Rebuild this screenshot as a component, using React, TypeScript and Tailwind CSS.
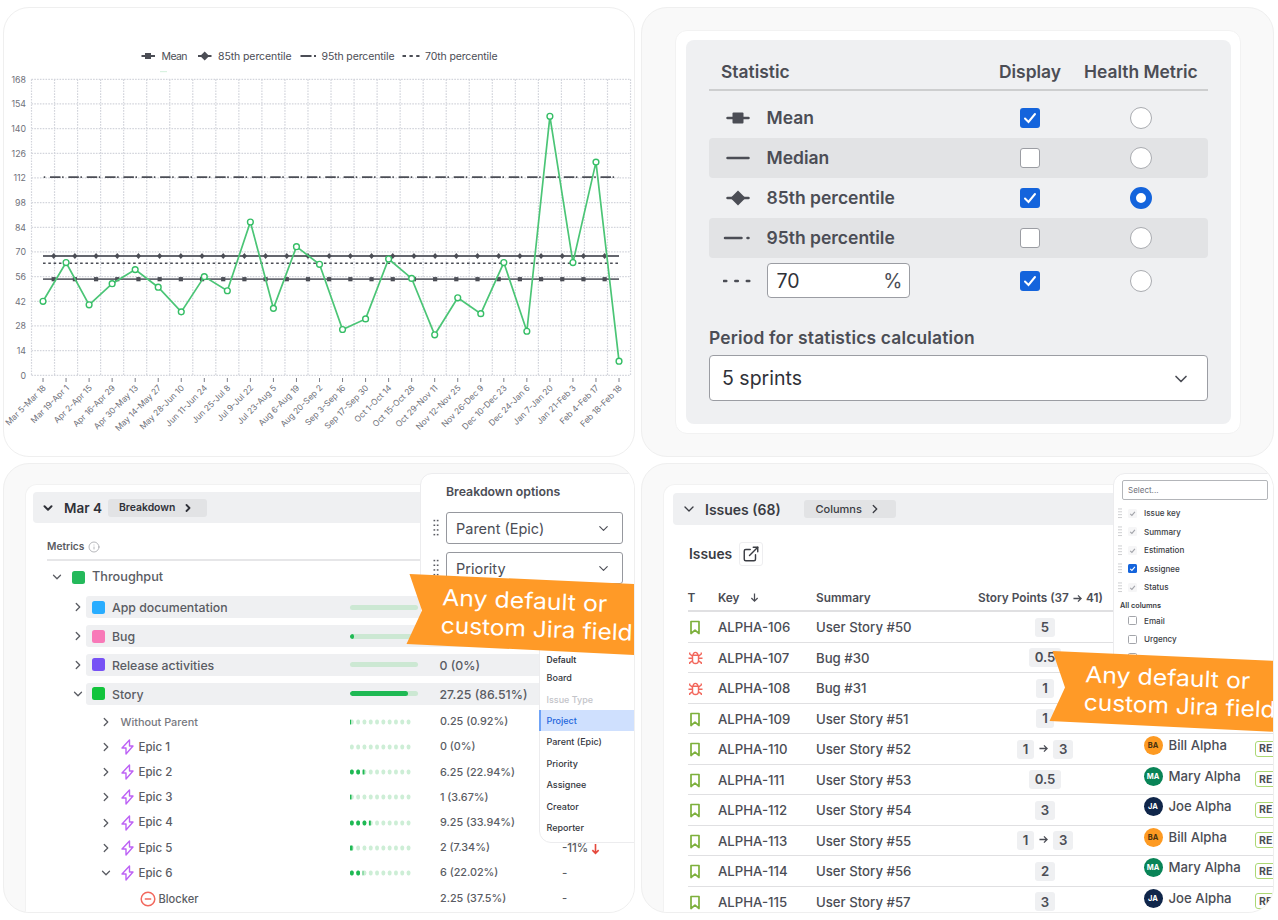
import type { ReactNode } from "react";
import { ChevronDown, ChevronRight, ExternalLink, Info } from "lucide-react";
import clsx from "clsx";

/* ---------- Control chart ---------- */

const POINTS: [string, number][] = [
  ["Mar 5-Mar 18", 42],
  ["Mar 19-Apr 1", 64],
  ["Apr 2-Apr 15", 40],
  ["Apr 16-Apr 29", 52],
  ["Apr 30-May 13", 60],
  ["May 14-May 27", 50],
  ["May 28-Jun 10", 36],
  ["Jun 11-Jun 24", 56],
  ["Jun 25-Jul 8", 48],
  ["Jul 9-Jul 22", 87],
  ["Jul 23-Aug 5", 38],
  ["Aug 6-Aug 19", 73],
  ["Aug 20-Sep 2", 63],
  ["Sep 3-Sep 16", 26],
  ["Sep 17-Sep 30", 32],
  ["Oct 1-Oct 14", 66],
  ["Oct 15-Oct 28", 55],
  ["Oct 29-Nov 11", 23],
  ["Nov 12-Nov 25", 44],
  ["Nov 26-Dec 9", 35],
  ["Dec 10-Dec 23", 64],
  ["Dec 24-Jan 6", 25],
  ["Jan 7-Jan 20", 147],
  ["Jan 21-Feb 3", 64],
  ["Feb 4-Feb 17", 121],
  ["Feb 18-Feb 18", 8],
];

const STEP = 23.04;
const LEFT = 31.5;
const RIGHT = LEFT + STEP * 26;
const TOP = 79.3;
const BOTTOM = 375.3;
const px = (i: number) => LEFT + STEP * (i + 0.5);
const py = (v: number) => BOTTOM - (v * (BOTTOM - TOP)) / 168;

const INK = "#4b4d55";

function Chart() {
  const markers = Array.from({ length: 27 }, (_, i) => 53.7 + i * 21.19);
  return (
    <svg viewBox="4 8 630 448" className="block h-[448px] w-[630px]" fontFamily="Inter, sans-serif">
      <rect x="160" y="71" width="7" height="1.2" fill="#d9f2e1" />

      <g stroke={INK} strokeWidth="1.8" fill={INK}>
        <path d="M141.500 56H155" />
        <rect x="145" y="53" width="6" height="6" stroke="none" />
        <path d="M198 56H211.500" />
        <path d="M204.700 51.500L209.200 56L204.700 60.500L200.200 56Z" stroke="none" />
        <path d="M300.500 56H311.500M314 56H316" />
        <path d="M402.500 56H406M409.500 56H412.800M416.200 56H419.500" />
      </g>
      <g fontSize="10.500" fill="#4b4d55">
        <text x="161.500" y="60" textLength="26">Mean</text>
        <text x="218" y="60" textLength="73.500">85th percentile</text>
        <text x="321.500" y="60" textLength="73">95th percentile</text>
        <text x="425" y="60" textLength="72.500">70th percentile</text>
      </g>

      <g stroke="#d3d5dc" strokeWidth="1.200" strokeDasharray="1.6 1.2">
        {Array.from({ length: 13 }, (_, i) => (
          <path key={i} d={`M${LEFT} ${py(i * 14)}H${RIGHT}`} />
        ))}
        {Array.from({ length: 27 }, (_, i) => (
          <path key={i} d={`M${LEFT + i * STEP} ${TOP}V${BOTTOM}`} />
        ))}
      </g>
      <g fontSize="8.800" fill="#6f717a" textAnchor="end">
        {Array.from({ length: 13 }, (_, i) => (
          <text key={i} x="26" y={py(i * 14) + 3.2}>
            {i * 14}
          </text>
        ))}
      </g>

      <g stroke={INK} strokeWidth="1.8" fill="none">
        <path d="M43 177.200H619" strokeDasharray="10.5 1.6 1.5 4.75" strokeDashoffset="11.35" />
        <path d="M43 256H619" stroke="#64666e" />
        <path d="M43 263.300H619" strokeWidth="1.500" strokeDasharray="2.600 2.700" />
        <path d="M43 279.200H619" stroke="#64666e" />
      </g>
      <g fill={INK}>
        {markers.map((x) => (
          <path key={x} d={`M${x} 253L${x + 2.6} 256L${x} 259L${x - 2.6} 256Z`} />
        ))}
        {markers.map((x) => (
          <rect key={x} x={x - 2.1} y="277.100" width="4.200" height="4.200" />
        ))}
      </g>

      <polyline
        points={POINTS.map(([, v], i) => `${px(i)},${py(v)}`).join(" ")}
        fill="none"
        stroke="#4bc576"
        strokeWidth="1.700"
      />
      {POINTS.map(([label, v], i) => (
        <g key={label}>
          <circle cx={px(i)} cy={py(v)} r="2.900" fill="#fff" stroke="#36be66" strokeWidth="1.400" />
          <path d={`M${px(i)} 378V382`} stroke="#7d7f87" strokeWidth="1" />
          <text
            transform={`translate(${px(i) + 3.5} 388.500) rotate(-45)`}
            textAnchor="end"
            fontSize="8.400"
            fill="#6f717a"
          >
            {label}
          </text>
        </g>
      ))}
    </svg>
  );
}

/* ---------- Statistics settings ---------- */

type Glyph = "square" | "line" | "diamond" | "dashdot" | "dots";

function LineGlyph({ kind }: { kind: Glyph }) {
  return (
    <svg viewBox="0 0 30 20" className="h-5 w-[30px] shrink-0" stroke="#4b4d55" strokeWidth="2.500" fill="#4b4d55">
      {kind === "square" && (
        <>
          <path d="M4.500 10H25.500" strokeLinecap="round" />
          <rect x="9.500" y="4.500" width="11" height="11" rx="1" stroke="none" />
        </>
      )}
      {kind === "line" && <path d="M4.500 10H25.500" strokeLinecap="round" />}
      {kind === "diamond" && (
        <>
          <path d="M4.500 10H25.500" strokeLinecap="round" />
          <path d="M15 2.500L22.500 10L15 17.500L7.500 10Z" stroke="none" />
        </>
      )}
      {kind === "dashdot" && <path d="M2 10H18.500M24.500 10H25.500" strokeLinecap="round" />}
      {kind === "dots" && <path d="M0.800 10H3.300M12.300 10H14.800M23.800 10H26.300" strokeLinecap="round" />}
    </svg>
  );
}

function Checkbox({ checked }: { checked: boolean }) {
  return (
    <span
      className={clsx(
        "grid h-5 w-5 place-items-center rounded-[3px]",
        checked ? "bg-[#1464dc]" : "border-[1.500px] border-[#9b9da3] bg-white"
      )}
    >
      {checked && (
        <svg viewBox="0 0 20 20" className="h-5 w-5" fill="none" stroke="#fff" strokeWidth="2">
          <path d="M5 10.500L8.500 14L15 6" strokeLinecap="round" />
        </svg>
      )}
    </span>
  );
}

function Radio({ checked }: { checked: boolean }) {
  return (
    <span
      className={clsx(
        "ml-[60px] h-[22px] w-[22px] shrink-0 rounded-full bg-white",
        checked ? "border-[6.500px] border-[#1464dc]" : "border border-[#a9abb0]"
      )}
    />
  );
}

function StatRow({
  glyph,
  label,
  display,
  health,
  shaded,
}: {
  glyph: Glyph;
  label: ReactNode;
  display: boolean;
  health: boolean;
  shaded?: boolean;
}) {
  return (
    <div className={clsx("flex h-10 items-center rounded pl-[13.500px]", shaded && "bg-[#e2e3e5]")}>
      <LineGlyph kind={glyph} />
      <div className="ml-[14px] flex w-[223px] shrink-0 text-[17.500px] font-semibold">
        {typeof label === "string" ? <span className="pt-px">{label}</span> : label}
      </div>
      <div className="flex w-20 shrink-0 justify-center">
        <Checkbox checked={display} />
      </div>
      <Radio checked={health} />
    </div>
  );
}

function Statistics() {
  return (
    <div className="ml-[33px] mt-[22px] h-[404px] w-[566px] rounded-xl border border-[#f2f2f2] bg-white p-[9px] pl-[10px]">
      <div className="h-[384px] rounded-lg bg-[#eff0f2] px-[23px] text-[#4b4d55]">
        <div className="flex h-[51px] items-center border-b-2 border-[#cdcecf] pl-3 pt-[15px] text-[17.400px] font-semibold">
          <span className="w-[278px]">Statistic</span>
          <span className="w-[85px]">Display</span>
          <span className="whitespace-nowrap">Health Metric</span>
        </div>
        <div className="mt-[6.500px]">
          <StatRow glyph="square" label="Mean" display health={false} />
          <StatRow glyph="line" label="Median" display={false} health={false} shaded />
          <StatRow glyph="diamond" label="85th percentile" display health />
          <StatRow glyph="dashdot" label="95th percentile" display={false} health={false} shaded />
        </div>
        <div className="mt-[3px]">
          <StatRow
            glyph="dots"
            display
            health={false}
            label={
              <div className="flex h-[35px] w-[143px] items-center justify-between rounded border-[1.500px] border-[#9b9da3] bg-white pl-[9px] pr-[6px] pt-[2px] text-[19.500px] font-normal text-[#2f3138]">
                <span>70</span>
                <span className="text-[#4b4d55]">%</span>
              </div>
            }
          />
        </div>
        <div className="mt-[24.500px] text-[17.400px] font-semibold leading-[26px] tracking-[0.180px]">
          Period for statistics calculation
        </div>
        <div className="mt-1 flex h-[46px] items-center justify-between rounded border-[1.500px] border-[#9b9da3] bg-white pl-3 pr-[16px] pt-[2px] text-[19.500px] text-[#2f3138]">
          <span>5 sprints</span>
          <ChevronDown className="h-5 w-5 text-[#4b4d55]" />
        </div>
      </div>
    </div>
  );
}

/* ---------- Shared bits ---------- */

function Ribbon({ className }: { className: string }) {
  return (
    <div className={clsx("absolute", className)}>
      <svg viewBox="0 0 240 90" className="h-[90px] w-[240px]">
        <path d="M3.500 2L240 12.500V83.500L0.500 72L16 38.500Z" fill="#ff9a27" />
        <g fill="#fff" fontFamily="Inter, sans-serif" fontSize="22.500">
          <text transform="translate(36 33.200) rotate(2.300)" textLength="165" lengthAdjust="spacingAndGlyphs">
            Any default or
          </text>
          <text transform="translate(34.500 61) rotate(2.300)" textLength="192" lengthAdjust="spacingAndGlyphs">
            custom Jira field
          </text>
        </g>
      </svg>
    </div>
  );
}

function Grip({ className }: { className?: string }) {
  return (
    <svg viewBox="0 0 6 18" className={className} fill="#5a5c63">
      {[1.5, 6.2, 10.9, 15.6].map((y) => (
        <g key={y}>
          <rect x="0.500" y={y - 0.7} width="1.700" height="1.500" />
          <rect x="3.800" y={y - 0.7} width="1.700" height="1.500" />
        </g>
      ))}
    </svg>
  );
}

/* ---------- Breakdown ---------- */

const TYPES = [
  { name: "App documentation", color: "#29adff", pct: 0, value: "" },
  { name: "Bug", color: "#f879b8", pct: 6, value: "" },
  { name: "Release activities", color: "#7751f5", pct: 0, value: "0 (0%)" },
  { name: "Story", color: "#12c43c", pct: 86.51, value: "27.25 (86.51%)", open: true },
];

const EPICS = [
  { name: "Without Parent", fill: 0.3, value: "0.25 (0.92%)", delta: "" },
  { name: "Epic 1", fill: 0, value: "0 (0%)", delta: "" },
  { name: "Epic 2", fill: 2.5, value: "6.25 (22.94%)", delta: "" },
  { name: "Epic 3", fill: 0.4, value: "1 (3.67%)", delta: "" },
  { name: "Epic 4", fill: 3.5, value: "9.25 (33.94%)", delta: "" },
  { name: "Epic 5", fill: 0.7, value: "2 (7.34%)", delta: "-11%" },
  { name: "Epic 6", fill: 2.2, value: "6 (22.02%)", delta: "-", open: true },
];

const FIELDS = ["Parent (Epic)", "Priority", "Assignee", "Creator", "Reporter"];

function DotMeter({ fill }: { fill: number }) {
  return (
    <svg viewBox="0 0 62 6" className="h-[6px] w-[62px]">
      {Array.from({ length: 10 }, (_, i) => {
        const part = Math.max(0, Math.min(1, fill - i));
        return (
          <g key={i}>
            <rect x={i * 6.3} y="0.500" width="3.700" height="5" rx="1.700" fill="#cdeed6" />
            {part > 0 && (
              <rect x={i * 6.3} y="0.500" width={3.7 * part} height="5" rx={part === 1 ? 1.7 : 0.6} fill="#1fb954" />
            )}
          </g>
        );
      })}
    </svg>
  );
}

function Toggle({ open }: { open?: boolean }) {
  return open ? (
    <ChevronDown className="h-3.5 w-3.5 shrink-0" strokeWidth={2.2} />
  ) : (
    <ChevronRight className="h-3.5 w-3.5 shrink-0" strokeWidth={2.2} />
  );
}

function EpicIcon() {
  return (
    <svg
      viewBox="0 0 13 16"
      className="mr-[5px] h-[16px] w-[13px]"
      fill="none"
      stroke="#bd62f5"
      strokeWidth="1.400"
      strokeLinejoin="round"
    >
      <path d="M8.500 1L1 9H5V15L12 7H8.500Z" />
    </svg>
  );
}

function Breakdown() {
  return (
    <>
      <div className="ml-[21px] mt-5 h-[440px] rounded-tl-xl border-l border-t border-[#f2f2f2] bg-white text-[#5a5c63]">
        <div className="ml-[7px] mt-[7px] flex h-[31px] items-center rounded bg-[#eff0f2] pl-2 text-[#2f3138]">
          <ChevronDown className="h-[14px] w-[14px]" strokeWidth={3.4} />
          <span className="ml-[9px] w-11 pt-[2px] text-[13.500px] font-semibold">Mar 4</span>
          <span className="flex h-[18px] w-[99px] items-center rounded-[3px] bg-[#e2e3e5] pl-[11px] text-[10.400px] font-semibold">
            Breakdown
            <ChevronRight className="ml-[7px] h-3 w-3" strokeWidth={3.6} />
          </span>
        </div>
        <div className="ml-[21px] flex h-[38px] items-center border-b-2 border-[#e6e6e8] pt-[11px] text-[10.200px] font-semibold">
          Metrics
          <Info className="ml-1 h-3 w-3 text-[#a3a5aa]" strokeWidth={1.6} />
        </div>
        <div className="flex h-8 items-center pl-[24px] text-[12.700px] font-medium">
          <Toggle open />
          <span className="ml-2 mr-[7px] h-[13px] w-[13px] rounded-[2.500px] bg-[#24b95b]" />
          <span>Throughput</span>
        </div>
        {TYPES.map((t) => (
          <div key={t.name} className="flex h-[28.800px] items-center pl-[44.500px]">
            <Toggle open={t.open} />
            <div className="ml-[1.500px] flex h-[22px] flex-1 items-center rounded-l-[3px] bg-[#eff0f2] pl-[6px] text-[12.300px] font-medium">
              <span className="mr-[7px] h-[13px] w-[13px] rounded-[2.500px]" style={{ background: t.color }} />
              <span className="w-[237.500px] pt-[2px]">{t.name}</span>
              <span className="h-[5px] w-[68px] overflow-hidden rounded-full bg-[#cce8d3]">
                <span className="block h-full rounded-full bg-[#1fb954]" style={{ width: `${t.pct}%` }} />
              </span>
              <span className="ml-[22px] pt-[2px]">{t.value}</span>
            </div>
          </div>
        ))}
        <div className="pt-px">
          {EPICS.map((e, i) => (
            <div key={e.name} className="flex h-[25.200px] items-center pl-[73px] text-[11.500px] font-medium">
              <Toggle open={e.open} />
              <span className="ml-[7.500px] flex w-[229px] items-center">
                {i > 0 && <EpicIcon />}
                <span className={i === 0 ? "text-[10.900px] text-[#777980]" : "pt-px"}>{e.name}</span>
              </span>
              <span className="w-[90.500px]">
                <DotMeter fill={e.fill} />
              </span>
              <span className="w-[122px] pt-px text-[10.800px]">{e.value}</span>
              <span className="flex items-center pt-px">
                {e.delta}
                {e.delta === "-11%" && (
                  <svg
                    viewBox="0 0 10 13"
                    className="ml-[3px] mt-[2px] h-[12px] w-[9px]"
                    fill="none"
                    stroke="#e5483c"
                    strokeWidth="1.800"
                  >
                    <path d="M5 1V11M1.500 7.800L5 11.300L8.500 7.800" />
                  </svg>
                )}
              </span>
            </div>
          ))}
        </div>
        <div className="flex h-[25.200px] items-center pl-[114px] pt-px text-[11.100px] font-medium">
          <svg viewBox="0 0 16 16" className="h-4 w-4" fill="none" stroke="#f2685d" strokeWidth="1.500">
            <circle cx="8" cy="8" r="6.800" />
            <path d="M4.800 8H11.200" />
          </svg>
          <span className="ml-[2.500px] w-[281.500px] pt-px">Blocker</span>
          <span className="w-[122px] pt-px text-[10.800px]">2.25 (37.5%)</span>
          <span>-</span>
        </div>
      </div>

      {/* field picker opened from the Priority select */}
      <div className="absolute left-[535px] top-[169px] h-[210px] w-[110px] rounded-bl-xl border border-[#ececee] bg-white text-[9px] font-medium text-[#35373e]">
        <div className="mt-[17px] pl-[6.500px] text-[8.500px] font-semibold leading-[18px]">Default</div>
        <div className="pl-[6.500px] leading-[18px]">Board</div>
        <div className="mt-[1.500px] pl-[6.500px] leading-[21.400px] text-[#c3c4c9]">Issue Type</div>
        <div className="-ml-px border-l-2 border-[#6fa3f7] bg-[#cfe0fe] pl-[5.500px] leading-[21.400px] text-[#1e66dc]">
          Project
        </div>
        {FIELDS.map((f) => (
          <div key={f} className="pl-[6.500px] leading-[21.400px]">
            {f}
          </div>
        ))}
      </div>

      <div className="absolute left-[416px] top-[9px] h-[150px] w-[230px] rounded-l-xl border border-[#ececee] bg-white pl-[12px] text-[#4b4d55]">
        <div className="ml-[13px] mt-[10px] text-[12.300px] font-semibold leading-4">Breakdown options</div>
        {["Parent (Epic)", "Priority"].map((f, i) => (
          <div key={f} className={clsx("flex items-center", i === 0 ? "mt-3" : "mt-2")}>
            <Grip className="h-[18px] w-[6px]" />
            <div className="ml-[7px] flex h-[32px] w-[177px] items-center justify-between rounded-[3px] border border-[#96989e] pl-[9px] pr-[11px] pt-px text-[14.500px]">
              {f}
              <ChevronDown className="h-[15px] w-[15px]" strokeWidth={1.8} />
            </div>
          </div>
        ))}
      </div>
      <Ribbon className="left-[402px] top-[108px]" />
    </>
  );
}

/* ---------- Issues ---------- */

type Person = "Bill" | "Mary" | "Joe";

const ISSUES: { key: number; summary: string; points: string[]; person?: Person }[] = [
  { key: 106, summary: "User Story #50", points: ["5"] },
  { key: 107, summary: "Bug #30", points: ["0.5"] },
  { key: 108, summary: "Bug #31", points: ["1"] },
  { key: 109, summary: "User Story #51", points: ["1"] },
  { key: 110, summary: "User Story #52", points: ["1", "3"], person: "Bill" },
  { key: 111, summary: "User Story #53", points: ["0.5"], person: "Mary" },
  { key: 112, summary: "User Story #54", points: ["3"], person: "Joe" },
  { key: 113, summary: "User Story #55", points: ["1", "3"], person: "Bill" },
  { key: 114, summary: "User Story #56", points: ["2"], person: "Mary" },
  { key: 115, summary: "User Story #57", points: ["3"], person: "Joe" },
];

const AVATAR: Record<Person, string> = {
  Bill: "bg-[#fd9a22] text-[#4a3210]",
  Mary: "bg-[#098457] text-white",
  Joe: "bg-[#10264a] text-white",
};

function StoryIcon() {
  return (
    <svg
      viewBox="0 0 12 15"
      className="ml-[1px] h-[15px] w-3"
      fill="none"
      stroke="#7db03c"
      strokeWidth="1.700"
      strokeLinejoin="round"
    >
      <path d="M2 1.500H10V13.500L6 10.200L2 13.500Z" />
    </svg>
  );
}

function BugIcon() {
  return (
    <svg
      viewBox="0 0 16 15"
      className="h-[14px] w-[15px]"
      fill="none"
      stroke="#f2685d"
      strokeWidth="1.500"
      strokeLinejoin="round"
    >
      <path d="M4.800 4.500H11.200V9.800A3.200 3.600 0 0 1 4.800 9.800Z" />
      <path d="M5.500 4.500A2.500 3 0 0 1 10.500 4.500" />
      <path d="M0.500 7.800H4.800M11.200 7.800H15.500M1.800 1.500V3.200L4.800 5.500M14.200 1.500V3.200L11.200 5.500M1.800 14V12.500L4.800 10.500M14.200 14V12.500L11.200 10.500" />
    </svg>
  );
}

function Arrow({ className }: { className?: string }) {
  return (
    <svg viewBox="0 0 10 10" className={className} fill="none" stroke="currentColor" strokeWidth="1.400">
      <path d="M0.500 5H9M5.500 1.500L9 5L5.500 8.500" />
    </svg>
  );
}

function ColumnOption({ name, state, grip }: { name: string; state: "on" | "locked" | "off"; grip?: boolean }) {
  return (
    <div className="flex h-[18.500px] items-center text-[8.100px] font-medium">
      <span className="w-[10px]">{grip && <Grip className="h-[11px] w-1 opacity-60" />}</span>
      <span
        className={clsx(
          "mr-[7px] grid h-[9px] w-[9px] place-items-center rounded-[1.500px]",
          state === "on" && "bg-[#1464dc] text-white",
          state === "locked" && "bg-[#f6f6f7] text-[#a3a5aa]",
          state === "off" && "border border-[#a3a5aa]"
        )}
      >
        {state !== "off" && (
          <svg viewBox="0 0 9 9" className="h-[9px] w-[9px]" fill="none" stroke="currentColor" strokeWidth="1.100">
            <path d="M2.200 4.800L3.900 6.400L6.900 2.800" />
          </svg>
        )}
      </span>
      {name}
    </div>
  );
}

function Issues() {
  return (
    <>
      <div className="ml-[21px] mt-5 h-[440px] rounded-tl-xl border-l border-t border-[#f2f2f2] bg-white text-[#4b4d55]">
        <div className="ml-[9px] mt-2 flex h-8 items-center rounded bg-[#eff0f2] pl-2 text-[#3a3c43]">
          <ChevronDown className="h-4 w-4" />
          <span className="ml-2 w-[98.500px] pt-px text-[14px] font-semibold">Issues (68)</span>
          <span className="flex h-[18px] w-[92px] items-center rounded-[3px] bg-[#e2e3e5] pl-3 text-[11px] font-medium">
            Columns
            <ChevronRight className="ml-[6px] h-3.5 w-3.5" strokeWidth={2.2} />
          </span>
        </div>
        <div className="ml-[25px] flex h-[57px] items-center text-[13.800px] font-semibold text-[#3a3c43]">
          <span className="w-[49.500px] pt-px">Issues</span>
          <span className="grid h-6 w-6 place-items-center rounded-[3px] border border-[#eeeef0]">
            <ExternalLink className="h-[18px] w-[18px]" strokeWidth={1.9} />
          </span>
        </div>
        <div className="ml-[23.500px] flex h-[30px] items-center border-b-2 border-[#e0e0e2] pt-[5px] text-[11.800px] font-semibold">
          <span className="w-[30.500px]">T</span>
          <span className="flex w-[98px] items-center">
            Key
            <Arrow className="mb-[2px] ml-[10px] h-[9px] w-[9px] rotate-90" />
          </span>
          <span className="w-[162px]">Summary</span>
          <span className="flex items-center whitespace-nowrap">
            Story Points (37
            <Arrow className="mx-1 mb-px h-[9px] w-[9px]" />
            41)
          </span>
        </div>
        {ISSUES.map((issue) => (
          <div
            key={issue.key}
            className="ml-[23.500px] flex h-[30.530px] items-center border-b border-[#e0e0e2] text-[13.200px] font-medium"
          >
            <span className="w-[30.500px] shrink-0 pt-[2px]">
              {issue.summary.startsWith("Bug") ? <BugIcon /> : <StoryIcon />}
            </span>
            <span className="w-[98px] shrink-0 pt-[3px]">ALPHA-{issue.key}</span>
            <span className="w-[163px] shrink-0 pt-[3px]">{issue.summary}</span>
            <span className="flex w-[132px] shrink-0 items-center justify-center pt-px">
              {issue.points.map((p, i) => (
                <span key={i} className="flex items-center">
                  {i > 0 && <Arrow className="mx-[5px] mb-[2px] h-[9px] w-[9px]" />}
                  <span className="flex h-[19px] items-center rounded-[3px] bg-[#eff0f2] px-[5.800px] pt-px font-semibold">
                    {p}
                  </span>
                </span>
              ))}
            </span>
            {issue.person && (
              <>
                <span className="mb-[6px] ml-[32.500px] flex w-[111.500px] shrink-0 items-center">
                  <span
                    className={clsx(
                      "mr-[6px] grid h-[19px] w-[19px] shrink-0 place-items-center rounded-full text-[7.500px] font-bold",
                      AVATAR[issue.person]
                    )}
                  >
                    {issue.person[0]}A
                  </span>
                  <span className="whitespace-nowrap pt-px">{issue.person} Alpha</span>
                </span>
                <span className="flex h-[16px] w-[60px] shrink-0 items-center rounded-[3px] border-[1.500px] border-[#acd873] pl-[3px] pt-px text-[10.500px] font-bold">
                  RE
                </span>
              </>
            )}
          </div>
        ))}
      </div>

      <div className="absolute left-[471px] top-[9px] h-[210px] w-[170px] rounded-tl-xl border border-[#ececee] bg-white text-[#3a3c43]">
        <div className="ml-2 mt-[6px] flex h-5 w-[146px] items-center rounded-[2px] border border-[#b3b5b9] pl-[5px] text-[8px] text-[#6f717a]">
          Select...
        </div>
        <div className="ml-1 mt-[4px]">
          <ColumnOption name="Issue key" state="locked" grip />
          <ColumnOption name="Summary" state="locked" grip />
          <ColumnOption name="Estimation" state="locked" grip />
          <ColumnOption name="Assignee" state="on" grip />
          <ColumnOption name="Status" state="locked" grip />
          <div className="ml-[2px] mt-[2px] text-[7.300px] font-semibold leading-[13px]">All columns</div>
          <ColumnOption name="Email" state="off" />
          <ColumnOption name="Urgency" state="off" />
          <ColumnOption name="" state="off" />
        </div>
      </div>
      <Ribbon className="left-[407px] top-[185px]" />
    </>
  );
}

function Card({ white, children }: { white?: boolean; children: ReactNode }) {
  return (
    <section
      className={clsx(
        "relative flow-root overflow-hidden rounded-[26px] border border-[#efefef]",
        white ? "bg-white" : "bg-[#f9f9f9]"
      )}
    >
      {children}
    </section>
  );
}

export default function App() {
  return (
    <main className="grid h-[920px] w-[1278px] grid-cols-[632px_633px] grid-rows-[450px_450px] gap-[6px] overflow-hidden bg-white pl-[3px] pt-[7px] font-['Inter',sans-serif]">
      <Card white>
        <Chart />
      </Card>
      <Card>
        <Statistics />
      </Card>
      <Card>
        <Breakdown />
      </Card>
      <Card>
        <Issues />
      </Card>
    </main>
  );
}
